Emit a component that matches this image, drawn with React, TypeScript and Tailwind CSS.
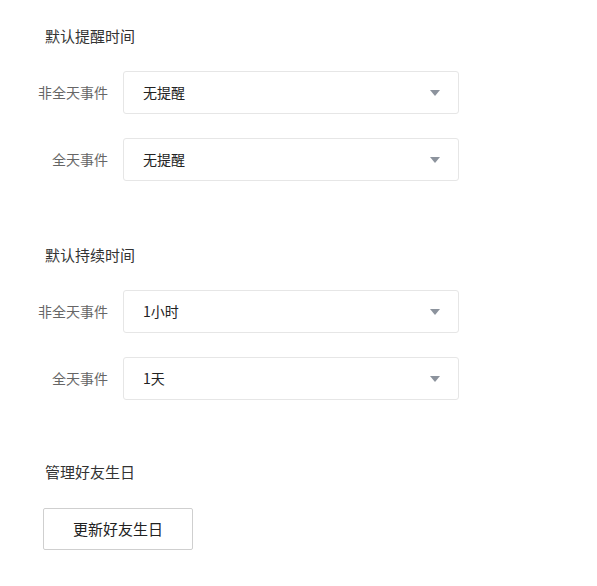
import React from "react";

const font = { fontFamily: '"Noto Sans CJK SC", "Noto Sans", sans-serif' };

function Select({ value }: { value: string }) {
  return (
    <div className="ml-[15px] flex h-[43px] w-[336px] items-center justify-between rounded-[3px] border border-[#e6e6e6] bg-white pl-[19px] pr-[18px]">
      <span className="text-[14px] text-[#222]">{value}</span>
      <span className="h-0 w-0 border-x-[5px] border-t-[6px] border-x-transparent border-t-[#8c939d]" />
    </div>
  );
}

function Row({ label, value }: { label: string; value: string }) {
  return (
    <div className="flex items-center">
      <div className="w-[108px] text-right text-[14px] text-[#666]">{label}</div>
      <Select value={value} />
    </div>
  );
}

function Heading({ children }: { children: React.ReactNode }) {
  return (
    <h3 className="h-[22px] pl-[45px] text-[15px] leading-[22px] text-[#333]">
      {children}
    </h3>
  );
}

export default function App() {
  const sections = [
    {
      title: "默认提醒时间",
      rows: [
        { label: "非全天事件", value: "无提醒" },
        { label: "全天事件", value: "无提醒" },
      ],
    },
    {
      title: "默认持续时间",
      rows: [
        { label: "非全天事件", value: "1小时" },
        { label: "全天事件", value: "1天" },
      ],
    },
  ];

  return (
    <div className="min-h-[586px] w-full bg-white pt-[25px]" style={font}>
      {sections.map((s, i) => (
        <div key={s.title} className={i === 0 ? "mb-[63px]" : "mb-[61px]"}>
          <Heading>{s.title}</Heading>
          <div className="mt-[24px] flex flex-col gap-[24px]">
            {s.rows.map((r) => (
              <Row key={r.label} label={r.label} value={r.value} />
            ))}
          </div>
        </div>
      ))}
      <Heading>管理好友生日</Heading>
      <button className="ml-[43px] mt-[25px] h-[42px] w-[150px] rounded-[2px] border border-[#cfcfcf] bg-white text-[15px] text-[#222]">
        更新好友生日
      </button>
    </div>
  );
}
